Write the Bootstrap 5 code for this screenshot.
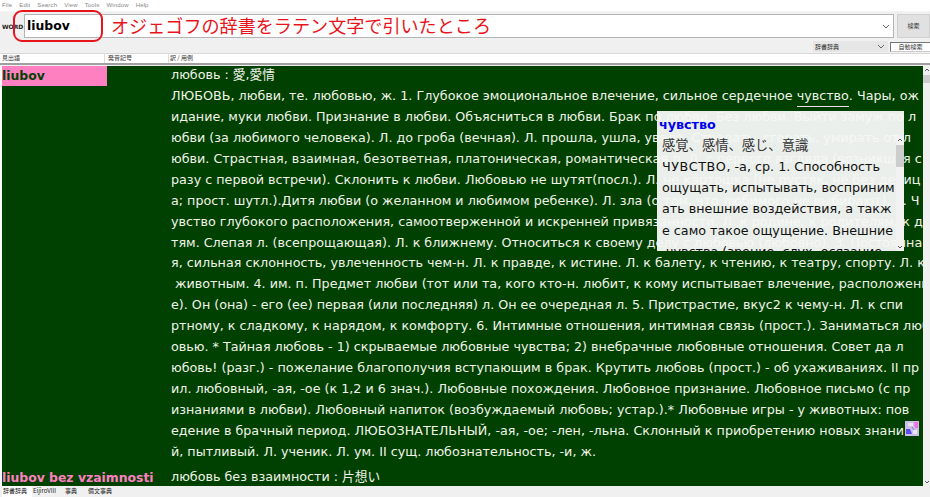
<!DOCTYPE html>
<html lang="ja">
<head>
<meta charset="utf-8">
<title>PDIC</title>
<link href="https://cdn.jsdelivr.net/npm/bootstrap@5.3.0/dist/css/bootstrap.min.css" rel="stylesheet">
<style>
html,body{height:100%;}
body{width:930px;height:497px;overflow:hidden;background:#f0f0f0;font-family:"Noto Sans CJK JP","Liberation Sans",sans-serif;color:#000;}
.app-shell{height:497px;}
.menu-bar{height:11px;background:#fff;font:6px/10px "Liberation Sans",sans-serif;color:#888;gap:7px;padding-left:2px;letter-spacing:.15px;}
.word-row{height:28px;padding:2px 0 0 2px;border-top:1px solid #f4f4f4;}
.word-lbl{width:22px;height:24px;font:bold 6px/26px "DejaVu Sans",sans-serif;color:#222;}
.word-box{height:24px;background:#fff;border:1px solid #b4b4b4;padding-left:2px;font:bold 12.4px/22px "DejaVu Sans",sans-serif;margin-right:3px;}
.word-chev{width:10px;height:10px;margin-right:2px;}
.search-btn{width:33px;height:24px;background:#e1e1e1;border:1px solid #d0d0d0;font-size:6px;line-height:22px;text-align:center;color:#333;}
.note-ring{position:absolute;left:13px;top:10px;width:90px;height:32px;border:2px solid #e8141c;border-radius:9px;}
.note-text{position:absolute;left:111px;top:12px;font-size:18.1px;line-height:27px;color:#e8141c;white-space:nowrap;}
.tool-row{height:15px;border-bottom:1px solid #d8d8d8;padding-top:2px;}
.dict-pick{width:75px;height:11px;background:#e6e6e6;font-size:6px;line-height:11px;padding-left:2px;color:#333;}
.auto-btn{width:40px;height:10px;margin-left:2px;margin-top:1px;background:#fff;border:1px solid #777;border-right:0;border-bottom-color:#ccc;font-size:6px;line-height:8px;text-align:center;color:#333;}
.head-row{height:9px;background:#fff;font-size:6px;line-height:8px;color:#333;}
.head-a{width:105px;padding-left:2px;border-right:1px solid #ddd;}
.head-b{width:64px;padding-left:3px;border-right:1px solid #ddd;}
.head-c{padding-left:1px;}
.head-rule{height:2px;background:#a0a0a0;}
.main-pane{height:420px;background:#fff;padding-left:2px;margin-top:1px;position:relative;}
.green-pane{width:921px;background:#004000;overflow:hidden;font:12.72px/20.94px "DejaVu Sans","Noto Sans CJK JP",sans-serif;color:#f0f4e8;}
.entry-row{display:flex;}
.entry-row + .entry-row{margin-top:5px;}
.entry-word{width:105px;height:20px;font:bold 12.4px/19px "DejaVu Sans",sans-serif;white-space:nowrap;color:#ff80c0;flex:none;}
.entry-word.is-hit{background:#ff80c0;color:#004000;}
.entry-body{margin-left:64px;white-space:pre;flex:none;margin-top:-1px;}
.under-word{border-bottom:1.5px solid #efd8ef;padding-bottom:3px;}
.scroll-main{width:7px;background:#f0f0f0;position:relative;}
.scroll-thumb{height:8px;background:#cdcdcd;margin-top:9px;}
.pop-card{position:absolute;left:657px;top:45px;width:247px;height:140px;background:rgba(245,247,245,.96);overflow:hidden;padding:4px 8px 0 5px;color:#111;font:12.72px/21.15px "DejaVu Sans","Noto Sans CJK JP",sans-serif;white-space:pre;}
.pop-title{font-weight:bold;color:#0000f0;line-height:20px;margin-left:-3px;}
.pop-cjk{color:#333;font-size:13.3px;}
.pop-caps{letter-spacing:.55px;}
.pop-bar{position:absolute;right:0;top:25px;bottom:0;width:8px;background:#f2f2f2;}
.pop-thumb{position:absolute;left:0;top:9px;width:100%;height:22px;background:#cdcdcd;}
.chev-up,.chev-dn{position:absolute;left:1px;width:6px;height:6px;}
.chev-up{top:1px;}.chev-dn{bottom:1px;}
.deco-icon{position:absolute;left:905px;top:355px;width:14px;height:15px;}
.tab-row{height:11px;font-size:6px;line-height:10px;color:#222;background:#f0f0f0;padding-left:2px;}
.tab-item{padding:0 1px;}
.tab-one{width:30px;background:#fff;}
.tab-two{width:32px;}
.tab-three{width:23px;}
.tab-four{width:27px;}
</style>
</head>
<body>
<div class="app-shell d-flex flex-column position-relative">
  <div class="menu-bar d-flex"><span>File</span><span>Edit</span><span>Search</span><span>View</span><span>Tools</span><span>Window</span><span>Help</span></div>
  <div class="word-row d-flex align-items-start">
    <div class="word-lbl">WORD</div>
    <div class="word-box flex-grow-1 d-flex justify-content-between align-items-center">
      <span>liubov</span>
      <svg class="word-chev" viewBox="0 0 10 10"><path d="M2 4l3 3 3-3" fill="none" stroke="#666"/></svg>
    </div>
    <div class="search-btn">検索</div>
  </div>
  <div class="tool-row d-flex justify-content-end align-items-start">
    <div class="dict-pick d-flex justify-content-between">辞書辞典<svg class="word-chev" viewBox="0 0 10 10"><path d="M2 4l3 3 3-3" fill="none" stroke="#666"/></svg></div>
    <div class="auto-btn">自動検索</div>
  </div>
  <div class="head-row d-flex"><div class="head-a">見出語</div><div class="head-b">発音記号</div><div class="head-c">訳 / 用例</div></div>
  <div class="head-rule"></div>
  <div class="main-pane d-flex">
    <div class="green-pane">
      <div class="entry-row"><div class="entry-word is-hit">liubov</div><div class="entry-body">любовь : 愛,愛情
ЛЮБОВЬ, любви, те. любовью, ж. 1. Глубокое эмоциональное влечение, сильное сердечное <span class="under-word">чувство</span>. Чары, ож
идание, муки любви. Признание в любви. Объясниться в любви. Брак по любви. Без любви. Выйти замуж по л
юбви (за любимого человека). Л. до гроба (вечная). Л. прошла, ушла, увяла. Страдать, сгорать, умирать от л
юбви. Страстная, взаимная, безответная, платоническая, романтическая л. Л. с первого взгляда (возникшая с
разу с первой встречи). Склонить к любви. Любовью не шутят(посл.). Л. не картошка (не пустяк, не без делиц
а; прост. шутл.).Дитя любви (о желанном и любимом ребенке). Л. зла (о том, что любимого не выбирают). 2. Ч
увство глубокого расположения, самоотверженной и искренней привязанности. Л. к родине, к родителям, к де
тям. Слепая л. (всепрощающая). Л. к ближнему. Относиться к своему делу с любовью (любовно). 3. Постоянна
я, сильная склонность, увлеченность чем-н. Л. к правде, к истине. Л. к балету, к чтению, к театру, спорту. Л. к
 животным. 4. им. п. Предмет любви (тот или та, кого кто-н. любит, к кому испытывает влечение, расположени
е). Он (она) - его (ее) первая (или последняя) л. Он ее очередная л. 5. Пристрастие, вкус2 к чему-н. Л. к спи
ртному, к сладкому, к нарядом, к комфорту. 6. Интимные отношения, интимная связь (прост.). Заниматься люб
овью. * Тайная любовь - 1) скрываемые любовные чувства; 2) внебрачные любовные отношения. Совет да л
юбовь! (разг.) - пожелание благополучия вступающим в брак. Крутить любовь (прост.) - об ухаживаниях. II пр
ил. любовный, -ая, -ое (к 1,2 и 6 знач.). Любовные похождения. Любовное признание. Любовное письмо (с пр
изнаниями в любви). Любовный напиток (возбуждаемый любовь; устар.).* Любовные игры - у животных: пов
едение в брачный период. ЛЮБОЗНАТЕЛЬНЫЙ, -ая, -ое; -лен, -льна. Склонный к приобретению новых знани
й, пытливый. Л. ученик. Л. ум. II сущ. любознательность, -и, ж.</div></div>
      <div class="entry-row"><div class="entry-word">liubov bez vzaimnosti</div><div class="entry-body">любовь без взаимности : 片想い</div></div>
    </div>
    <div class="scroll-main"><svg class="chev-up" viewBox="0 0 6 6"><path d="M1 4l2-2 2 2" fill="none" stroke="#555"/></svg><div class="scroll-thumb"></div><svg class="chev-dn" viewBox="0 0 6 6"><path d="M1 2l2 2 2-2" fill="none" stroke="#555"/></svg></div>
    <svg class="deco-icon" viewBox="0 0 14 15"><rect width="14" height="15" fill="#cdbfe6"/><path d="M3 2h5v3H3z" fill="#e8e4f4"/><path d="M9 1h4v6h-3z" fill="#f070e0"/><path d="M1 8h4l2 5H1z" fill="#5a50f0"/><path d="M8 9h4v4H8z" fill="#ece6f4"/><path d="M7 6l2 3" stroke="#8878d8"/></svg>
    <div class="pop-card"><div class="pop-title">чувство</div><div><span class="pop-cjk">感覚、感情、感じ、意識</span>
<span class="pop-caps">ЧУВСТВО</span>, -а, ср. 1. Способность
ощущать, испытывать, восприним
ать внешние воздействия, а такж
е само такое ощущение. Внешние
 чувства (зрение, слух, осязание,</div>
      <div class="pop-bar"><svg class="chev-up" viewBox="0 0 6 6"><path d="M1 4l2-2 2 2" fill="none" stroke="#555"/></svg><div class="pop-thumb"></div><svg class="chev-dn" viewBox="0 0 6 6"><path d="M1 2l2 2 2-2" fill="none" stroke="#555"/></svg></div>
    </div>
  </div>
  <div class="tab-row d-flex"><span class="tab-item tab-one">辞書辞典</span><span class="tab-item tab-two">EijiroVIII</span><span class="tab-item tab-three">事典</span><span class="tab-item tab-four">備文事典</span></div>
  <div class="note-ring"></div>
  <div class="note-text">オジェゴフの辞書をラテン文字で引いたところ</div>
</div>
<script src="https://cdn.jsdelivr.net/npm/bootstrap@5.3.0/dist/js/bootstrap.bundle.min.js"></script>
</body>
</html>
